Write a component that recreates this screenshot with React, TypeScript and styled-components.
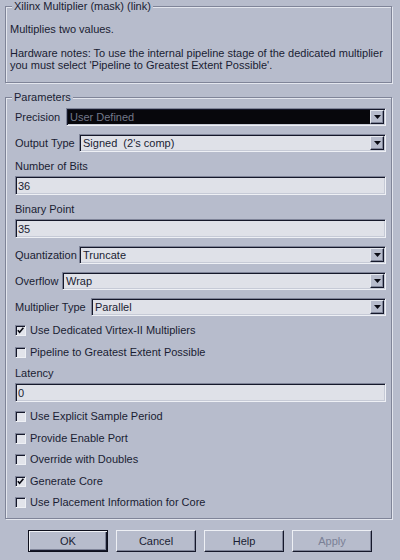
import React from "react";
import styled, { createGlobalStyle } from "styled-components";

const BG = "#b7bccc";
const TEXT = "#1a1d33";
const FIELD = "#dfe1e8";

const GlobalStyle = createGlobalStyle`
  html, body { margin: 0; padding: 0; background: ${BG}; }
  body {
    font-family: "Liberation Sans", Arial, sans-serif;
    font-size: 11px;
    color: ${TEXT};
  }
  #root { width: 400px; height: 560px; }
`;

const Page = styled.div`
  width: 400px;
  height: 560px;
  box-sizing: border-box;
  padding: 0 8px 0 5px;
  display: flex;
  flex-direction: column;
  background: ${BG};
`;

const GroupBox = styled.fieldset<{ $mt: number }>`
  margin: ${(p) => p.$mt}px 0 0 0;
  padding: 0;
  min-width: 0;
  border: 1px solid #7f8498;
  box-shadow: 1px 1px 0 #e3e6ee, inset 1px 1px 0 #e3e6ee;
`;

const Legend = styled.legend`
  margin-left: 6px;
  padding: 0 2px;
  line-height: 13px;
  background: ${BG};
`;

const Description = styled.div`
  padding: 10px 4px 11px 4px;
  display: flex;
  flex-direction: column;
  gap: 12px;
  line-height: 12px;
`;

const Para = styled.p`
  margin: 0;
`;

const Params = styled.div`
  padding: 4px 5px 8px 9px;
  display: flex;
  flex-direction: column;
  gap: 8px;
`;

const Row = styled.div`
  display: flex;
  align-items: center;
  height: 18px;
`;

const RowLabel = styled.span<{ $w: number }>`
  flex: 0 0 ${(p) => p.$w}px;
  white-space: nowrap;
  line-height: 13px;
`;

const SelectBox = styled.div<{ $dark?: boolean }>`
  flex: 1;
  height: 18px;
  box-sizing: border-box;
  display: flex;
  align-items: stretch;
  background: ${(p) => (p.$dark ? "#07070c" : FIELD)};
  border: 1px solid;
  border-color: #7f8498 #eef0f5 #eef0f5 #7f8498;
  box-shadow: inset 1px 1px 0 #15182a, inset -1px -1px 0 #c6cad6;
  padding: 1px;
`;

const SelectValue = styled.span<{ $dark?: boolean }>`
  flex: 1;
  display: flex;
  align-items: center;
  padding-left: 2px;
  white-space: pre;
  color: ${(p) => (p.$dark ? "#737889" : TEXT)};
`;

const DropButton = styled.span`
  flex: 0 0 14px;
  box-sizing: border-box;
  display: flex;
  align-items: center;
  justify-content: center;
  background: ${BG};
  border: 1px solid;
  border-color: #e6e9f0 #15182a #15182a #e6e9f0;
  box-shadow: inset -1px -1px 0 #7f8498;
`;

const Field = styled.div`
  display: flex;
  flex-direction: column;
  gap: 3px;
`;

const FieldLabel = styled.span`
  line-height: 13px;
`;

const TextInput = styled.input`
  height: 19px;
  box-sizing: border-box;
  width: 100%;
  margin: 0;
  padding: 0 2px;
  font: inherit;
  color: ${TEXT};
  background: ${FIELD};
  border: 1px solid;
  border-color: #7f8498 #eef0f5 #eef0f5 #7f8498;
  box-shadow: inset 1px 1px 0 #15182a, inset -1px -1px 0 #c6cad6;
  outline: none;
`;

const CheckRow = styled.label`
  display: flex;
  align-items: center;
  gap: 4px;
  height: 13.5px;
  line-height: 13px;
  white-space: nowrap;
`;

const CheckBox = styled.span`
  flex: 0 0 11px;
  height: 11px;
  box-sizing: border-box;
  display: flex;
  align-items: center;
  justify-content: center;
  background: #e2e4eb;
  border: 1px solid;
  border-color: #7f8498 #eef0f5 #eef0f5 #7f8498;
  box-shadow: inset 1px 1px 0 #15182a;
`;

const ButtonBar = styled.div`
  margin-top: 11px;
  display: flex;
  justify-content: center;
  gap: 8px;
  padding-left: 3px;
`;

const Button = styled.button<{ $default?: boolean }>`
  width: 80px;
  height: 22px;
  box-sizing: border-box;
  margin: 0;
  padding: 0;
  font: inherit;
  color: ${(p) => (p.disabled ? "#7a8096" : TEXT)};
  background: ${BG};
  border: 1px solid;
  border-color: ${(p) =>
    p.$default ? "#0d0f1c" : "#eef0f5 #15182a #15182a #eef0f5"};
  box-shadow: ${(p) =>
    p.$default
      ? "inset 1px 1px 0 #eef0f5, inset -1px -1px 0 #15182a, inset -2px -2px 0 #7f8498"
      : "inset -1px -1px 0 #7f8498"};
`;

const Arrow = () => (
  <svg width="7" height="4" viewBox="0 0 7 4">
    <path d="M0 0 H7 L3.5 4 Z" fill="#0a0b14" />
  </svg>
);

const Check = () => (
  <svg width="7" height="7" viewBox="0 0 7 7">
    <polyline points="0.8,3.2 2.6,5.2 6.4,0.8" fill="none" stroke="#0a0b14" strokeWidth="1.6" />
  </svg>
);

type SelectProps = { label: string; labelW: number; value: string; dark?: boolean };

const Select = ({ label, labelW, value, dark }: SelectProps) => (
  <Row>
    <RowLabel $w={labelW}>{label}</RowLabel>
    <SelectBox $dark={dark}>
      <SelectValue $dark={dark}>{value}</SelectValue>
      <DropButton>
        <Arrow />
      </DropButton>
    </SelectBox>
  </Row>
);

const Input = ({ label, value }: { label: string; value: string }) => (
  <Field>
    <FieldLabel>{label}</FieldLabel>
    <TextInput readOnly value={value} />
  </Field>
);

const Checkbox = ({ label, checked }: { label: string; checked?: boolean }) => (
  <CheckRow>
    <CheckBox>{checked ? <Check /> : null}</CheckBox>
    <span>{label}</span>
  </CheckRow>
);

export default function App() {
  return (
    <>
      <GlobalStyle />
      <Page>
        <GroupBox $mt={0}>
          <Legend>Xilinx Multiplier (mask) (link)</Legend>
          <Description>
            <Para>Multiplies two values.</Para>
            <Para>
              Hardware notes: To use the internal pipeline stage of the dedicated multiplier
              <br />
              you must select 'Pipeline to Greatest Extent Possible'.
            </Para>
          </Description>
        </GroupBox>
        <GroupBox $mt={8}>
          <Legend>Parameters</Legend>
          <Params>
            <Select label="Precision" labelW={51} value="User Defined" dark />
            <Select label="Output Type" labelW={64} value="Signed  (2's comp)" />
            <Input label="Number of Bits" value="36" />
            <Input label="Binary Point" value="35" />
            <Select label="Quantization" labelW={64} value="Truncate" />
            <Select label="Overflow" labelW={47} value="Wrap" />
            <Select label="Multiplier Type" labelW={76} value="Parallel" />
            <Checkbox label="Use Dedicated Virtex-II Multipliers" checked />
            <Checkbox label="Pipeline to Greatest Extent Possible" />
            <Input label="Latency" value="0" />
            <Checkbox label="Use Explicit Sample Period" />
            <Checkbox label="Provide Enable Port" />
            <Checkbox label="Override with Doubles" />
            <Checkbox label="Generate Core" checked />
            <Checkbox label="Use Placement Information for Core" />
          </Params>
        </GroupBox>
        <ButtonBar>
          <Button $default>OK</Button>
          <Button>Cancel</Button>
          <Button>Help</Button>
          <Button disabled>Apply</Button>
        </ButtonBar>
      </Page>
    </>
  );
}
